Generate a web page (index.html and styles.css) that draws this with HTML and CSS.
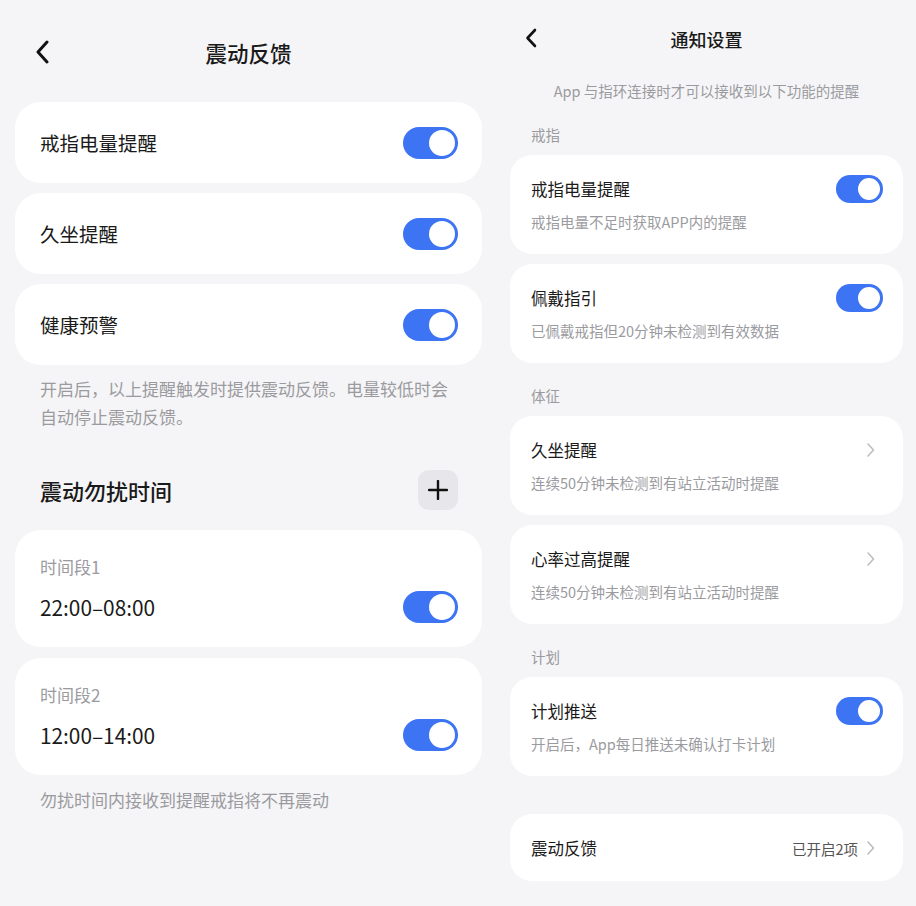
FILE: index.html
```html
<!DOCTYPE html>
<html lang="zh-CN">
<head>
  <meta charset="UTF-8" />
  <title>震动反馈 / 通知设置</title>
  <link rel="stylesheet" href="styles.css">
</head>
<body>
  <div class="screens">

    <!-- 左：震动反馈 -->
    <section class="panel panel-left">
      <header class="topbar">
        <svg class="back" width="14" height="24" viewBox="0 0 14 24"><path d="M12 2 L3 12 L12 22" fill="none" stroke="#111" stroke-width="3" stroke-linecap="round" stroke-linejoin="round"/></svg>
        <h1>震动反馈</h1>
      </header>

      <div class="card row-card">
        <span class="label">戒指电量提醒</span>
        <span class="switch on"></span>
      </div>
      <div class="card row-card">
        <span class="label">久坐提醒</span>
        <span class="switch on"></span>
      </div>
      <div class="card row-card">
        <span class="label">健康预警</span>
        <span class="switch on"></span>
      </div>

      <p class="note">开启后，以上提醒触发时提供震动反馈。电量较低时会自动停止震动反馈。</p>

      <div class="section-head">
        <h2>震动勿扰时间</h2>
        <button class="add-btn">
          <svg width="20" height="20" viewBox="0 0 20 20"><path d="M10 1 V19 M1 10 H19" stroke="#111" stroke-width="2.4" stroke-linecap="round"/></svg>
        </button>
      </div>

      <div class="card time-card">
        <div class="time-name">时间段1</div>
        <div class="time-row">
          <span class="time">22:00–08:00</span>
          <span class="switch on"></span>
        </div>
      </div>
      <div class="card time-card">
        <div class="time-name">时间段2</div>
        <div class="time-row">
          <span class="time">12:00–14:00</span>
          <span class="switch on"></span>
        </div>
      </div>

      <p class="note note-bottom">勿扰时间内接收到提醒戒指将不再震动</p>
    </section>

    <!-- 右：通知设置 -->
    <section class="panel panel-right">
      <header class="topbar topbar-sm">
        <svg class="back" width="12" height="20" viewBox="0 0 12 20"><path d="M10 2 L2.5 10 L10 18" fill="none" stroke="#111" stroke-width="2.6" stroke-linecap="round" stroke-linejoin="round"/></svg>
        <h1>通知设置</h1>
      </header>

      <p class="intro">App 与指环连接时才可以接收到以下功能的提醒</p>

      <div class="group-title">戒指</div>
      <div class="card item">
        <div class="item-top">
          <span class="item-title">戒指电量提醒</span>
          <span class="switch sm on"></span>
        </div>
        <div class="item-desc">戒指电量不足时获取APP内的提醒</div>
      </div>
      <div class="card item">
        <div class="item-top">
          <span class="item-title">佩戴指引</span>
          <span class="switch sm on"></span>
        </div>
        <div class="item-desc">已佩戴戒指但20分钟未检测到有效数据</div>
      </div>

      <div class="group-title">体征</div>
      <div class="card item">
        <div class="item-top">
          <span class="item-title">久坐提醒</span>
          <svg class="chev" width="9" height="16" viewBox="0 0 9 16"><path d="M2 2 L7.5 8 L2 14" fill="none" stroke="#bdbdc2" stroke-width="1.6" stroke-linecap="round" stroke-linejoin="round"/></svg>
        </div>
        <div class="item-desc">连续50分钟未检测到有站立活动时提醒</div>
      </div>
      <div class="card item">
        <div class="item-top">
          <span class="item-title">心率过高提醒</span>
          <svg class="chev" width="9" height="16" viewBox="0 0 9 16"><path d="M2 2 L7.5 8 L2 14" fill="none" stroke="#bdbdc2" stroke-width="1.6" stroke-linecap="round" stroke-linejoin="round"/></svg>
        </div>
        <div class="item-desc">连续50分钟未检测到有站立活动时提醒</div>
      </div>

      <div class="group-title">计划</div>
      <div class="card item">
        <div class="item-top">
          <span class="item-title">计划推送</span>
          <span class="switch sm on"></span>
        </div>
        <div class="item-desc">开启后，App每日推送未确认打卡计划</div>
      </div>

      <div class="card item item-link">
        <div class="item-top">
          <span class="item-title">震动反馈</span>
          <span class="item-value">
            已开启2项
            <svg class="chev" width="9" height="16" viewBox="0 0 9 16"><path d="M2 2 L7.5 8 L2 14" fill="none" stroke="#bdbdc2" stroke-width="1.6" stroke-linecap="round" stroke-linejoin="round"/></svg>
          </span>
        </div>
      </div>
    </section>

  </div>
</body>
</html>
```

FILE: styles.css
```css
* {
  box-sizing: border-box;
}

body {
  margin: 0;
  background-color: #f5f5f7;
  font-family: "Noto Sans CJK SC", "Noto Sans", sans-serif;
  color: #1a1a1a;
}

.screens {
  display: flex;
  width: 916px;
  height: 906px;
  overflow: hidden;
}

.panel {
  display: flex;
  flex-direction: column;
}

.panel-left {
  width: 497px;
  padding: 0 15px;
}

.panel-right {
  width: 419px;
  padding: 0 13px;
}

/* 顶部栏 */
.topbar {
  position: relative;
  display: flex;
  align-items: center;
  justify-content: center;
  height: 40px;
  margin-top: 32px;
  margin-bottom: 30px;
}

.topbar h1 {
  margin: 0;
  font-size: 21.5px;
  font-weight: 500;
}

.topbar .back {
  position: absolute;
  left: 20px;
  top: 8px;
}

.topbar-sm {
  height: 34px;
  margin-top: 22px;
  margin-bottom: 25px;
}

.topbar-sm h1 {
  font-size: 18px;
}

.topbar-sm .back {
  left: 15px;
  top: 6px;
}

/* 卡片 */
.card {
  background-color: #fff;
  border-radius: 26px;
}

.row-card {
  display: flex;
  align-items: center;
  justify-content: space-between;
  height: 81px;
  padding: 0 24px 0 25px;
  margin-bottom: 10px;
}

.label {
  font-size: 19.5px;
}

/* 开关 */
.switch {
  position: relative;
  display: inline-block;
  flex-shrink: 0;
  width: 55px;
  height: 32px;
  border-radius: 16px;
  background-color: #dcdce0;
}

.switch::after {
  content: "";
  position: absolute;
  top: 3px;
  left: 3px;
  width: 26px;
  height: 26px;
  border-radius: 50%;
  background-color: #fff;
}

.switch.on {
  background-color: #3d74f3;
}

.switch.on::after {
  left: 26px;
}

.switch.sm {
  width: 47px;
  height: 28px;
  border-radius: 14px;
}

.switch.sm::after {
  top: 3px;
  width: 22px;
  height: 22px;
}

.switch.sm.on::after {
  left: 22px;
}

.note {
  margin: 0;
  padding: 0 25px;
  font-size: 17px;
  line-height: 28px;
  color: #9b9b9f;
}

.section-head {
  display: flex;
  align-items: center;
  justify-content: space-between;
  padding: 0 24px 0 25px;
  margin-top: 39px;
  margin-bottom: 20px;
}

.section-head h2 {
  margin: 0;
  font-size: 22px;
  line-height: 36px;
  font-weight: 500;
}

.add-btn {
  display: flex;
  align-items: center;
  justify-content: center;
  width: 40px;
  height: 40px;
  padding: 0;
  border: none;
  border-radius: 11px;
  background-color: #e7e7eb;
}

.time-card {
  padding: 25px 24px 24px 25px;
  margin-bottom: 11px;
}

.time-name {
  font-size: 17px;
  line-height: 24px;
  color: #9b9b9f;
  margin-bottom: 12px;
}

.time-row {
  display: flex;
  align-items: center;
  justify-content: space-between;
}

.time {
  font-size: 20.8px;
}

.note-bottom {
  margin-top: 0;
}

/* 右侧 */
.intro {
  margin: 0 0 24px;
  text-align: center;
  font-size: 14.5px;
  line-height: 20px;
  color: #9b9b9f;
}

.group-title {
  padding-left: 21px;
  font-size: 14.5px;
  line-height: 20px;
  color: #9b9b9f;
  margin-bottom: 10px;
}

.item {
  border-radius: 22px;
  padding: 20px 20px 22px 21px;
  margin-bottom: 10px;
}

.item + .group-title {
  margin-top: 13px;
}

.item-top {
  display: flex;
  align-items: center;
  justify-content: space-between;
  height: 28px;
}

.item-title {
  font-size: 16.5px;
}

.item-desc {
  margin-top: 9px;
  font-size: 14.5px;
  line-height: 20px;
  color: #9b9b9f;
}

.chev {
  margin-right: 8px;
}

.item-link {
  margin-top: 28px;
  padding: 20px 20px 19px 21px;
}

.item-value {
  display: flex;
  align-items: center;
  gap: 8px;
  font-size: 14.5px;
  color: #555;
}
```
